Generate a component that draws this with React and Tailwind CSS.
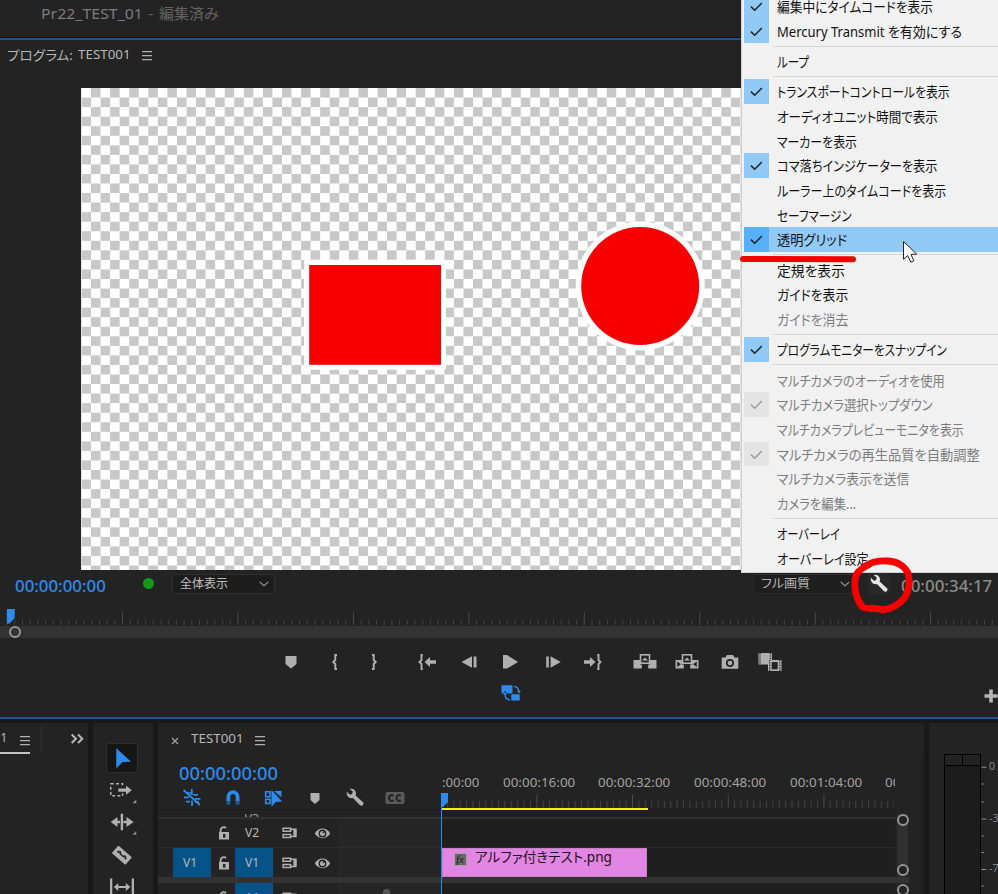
import React, { useLayoutEffect, useRef, useState } from "react";

const JP = "font-['Noto_Sans','Noto_Sans_CJK_JP',sans-serif]";

// Text squeezed or stretched horizontally to a set width.
function Fit({ w, className = "", children }) {
  const ref = useRef(null);
  const [scale, setScale] = useState(1);
  useLayoutEffect(() => {
    const n = ref.current.offsetWidth;
    if (n) setScale(w / n);
  }, [w, children]);
  return (
    <span className={`inline-block shrink-0 whitespace-nowrap ${className}`} style={{ width: w }}>
      <span ref={ref} className="inline-block origin-left [font-feature-settings:'palt']" style={{ transform: `scaleX(${scale})` }}>
        {children}
      </span>
    </span>
  );
}

function Icon({ className = "", w = 30, h = 24, children }) {
  return (
    <svg className={`shrink-0 ${className}`} width={w} height={h} viewBox={`${-w / 2} ${-h / 2} ${w} ${h}`} fill="#b0b0b0">
      {children}
    </svg>
  );
}

function Burger({ className = "" }) {
  return (
    <Icon w={12} h={12} className={className}>
      <path d="M-5-4.3H5M-5-.3H5M-5 3.7H5" stroke="#b0b0b0" strokeWidth="1.3" />
    </Icon>
  );
}

const MENU = [
  { t: "編集中にタイムコードを表示", w: 156, c: 1 },
  { t: "Mercury Transmit を有効にする", w: 185, c: 1 },
  null,
  { t: "ループ", w: 32 },
  null,
  { t: "トランスポートコントロールを表示", w: 173, c: 1 },
  { t: "オーディオユニット時間で表示", w: 161 },
  { t: "マーカーを表示", w: 80 },
  { t: "コマ落ちインジケーターを表示", w: 160, c: 1 },
  { t: "ルーラー上のタイムコードを表示", w: 169.5 },
  { t: "セーフマージン", w: 74.5 },
  { t: "透明グリッド", w: 70, c: 1, hot: true },
  null,
  { t: "定規を表示", w: 68 },
  { t: "ガイドを表示", w: 71.5 },
  { t: "ガイドを消去", w: 71.5, off: true },
  null,
  { t: "プログラムモニターをスナップイン", w: 170, c: 1 },
  null,
  { t: "マルチカメラのオーディオを使用", w: 168, off: true },
  { t: "マルチカメラ選択トップダウン", w: 155.5, c: 1, off: true },
  { t: "マルチカメラプレビューモニタを表示", w: 187, off: true },
  { t: "マルチカメラの再生品質を自動調整", w: 202.5, c: 1, off: true },
  { t: "マルチカメラ表示を送信", w: 132.5, off: true },
  { t: "カメラを編集...", w: 79.5, off: true },
  null,
  { t: "オーバーレイ", w: 62.5 },
  { t: "オーバーレイ設定", w: 91.5 },
];

function Menu() {
  return (
    <div className="absolute left-[741px] top-0 h-[573px] w-[257px] overflow-hidden border-b border-l border-[#cfcfcf] bg-[#f1f1f1]">
      <div className="-mt-[6px] flex flex-col pl-[2px]">
        {MENU.map((m, i) =>
          m === null ? (
            <div key={i} className="flex h-[5.67px] items-center pl-[29px]">
              <div className="h-px w-full bg-[#d6d6d6]" />
            </div>
          ) : (
            <div key={i} className={`flex h-[24.68px] items-center ${m.hot ? "bg-[#91c9f7]" : ""}`}>
              <div className={`flex h-full w-[24.5px] items-center justify-center ${!m.c ? "" : m.hot ? "bg-[#56b0fa]" : m.off ? "bg-[#e4e4e4]" : "bg-[#91c9f7]"}`}>
                {m.c && (
                  <svg width="14" height="12" viewBox="0 0 14 12" fill="none" className="mt-[1px]">
                    <path d="M1.9 5.6L5.7 9.3L12.9 2" stroke={m.off ? "#9c9c9c" : "#222"} strokeWidth="1.5" />
                  </svg>
                )}
              </div>
              <Fit w={m.w} className={`ml-[8px] mt-[1.4px] text-[14px] leading-[24px] ${JP} ${m.off ? "text-[#7d7d7d]" : "text-[#111]"}`}>
                {m.t}
              </Fit>
            </div>
          )
        )}
      </div>
    </div>
  );
}

function Viewer() {
  return (
    <svg className="ml-[81px] shrink-0" width="917" height="481.5" viewBox="81 88 917 481.5">
      <defs>
        <pattern id="grid" x="81.45" y="88" width="19.1" height="19.1" patternUnits="userSpaceOnUse">
          <rect width="19.1" height="19.1" fill="#fff" />
          <rect x="9.55" width="9.55" height="9.55" fill="#c8c8c8" />
          <rect y="9.55" width="9.55" height="9.55" fill="#c8c8c8" />
        </pattern>
      </defs>
      <rect x="81" y="88" width="917" height="482" fill="url(#grid)" />
      <rect x="304" y="259.7" width="142" height="110" rx="2" fill="#fff" />
      <rect x="309.2" y="265" width="131.8" height="99.8" fill="#f60000" />
      <circle cx="640.2" cy="286" r="64.5" fill="#fff" />
      <circle cx="640.2" cy="286" r="59" fill="#f60000" />
    </svg>
  );
}

function Ticks({ x0, step, count, width, h, tall, short }) {
  return (
    <svg className="block shrink-0" width={width} height={h}>
      {Array.from({ length: count }, (_, i) => (
        <rect key={i} x={x0 + i * step} y={i % 15 === 0 ? h - tall : h - short} width="1" height={i % 15 === 0 ? tall : short} fill={i % 15 === 0 ? "#4b4b4b" : "#444"} />
      ))}
    </svg>
  );
}

const WRENCH = "M-8.3-6.2L-5-3.2L-2.8-3.9L-2.3-6.4L-5.3-9C-2.8-9.8.6-8.3 1-5C1.1-4 .9-3.2.6-2.5L8 4.3C9.6 6.2 7 8.9 5.1 7.3L-2.1-.1C-5.2.9-8.6-1.4-8.3-6.2Z";

function Chevron() {
  return (
    <svg width="10" height="6" viewBox="0 0 10 6" fill="none">
      <path d="M.7.8L5 4.8L9.3.8" stroke="#a5a5a5" strokeWidth="1.1" />
    </svg>
  );
}

function Transport() {
  return (
    <div className="mt-[11.5px] flex h-6 shrink-0 items-center">
      <Icon className="ml-[276px]">
        <path d="M-5.5-6H5.5V2L0 6.5L-5.5 2Z" />
      </Icon>
      <Icon className="ml-[14px]">
        <path d="M2-7H.3V-2L-1.7 0L.3 2V7H2" fill="none" stroke="#b0b0b0" strokeWidth="1.9" />
      </Icon>
      <Icon className="ml-[8.5px]">
        <path d="M-2-7H-.3V-2L1.7 0L-.3 2V7H-2" fill="none" stroke="#b0b0b0" strokeWidth="1.9" />
      </Icon>
      <Icon className="ml-[23.5px]">
        <path d="M-4.2-7H-5.5V-2L-7.5 0L-5.5 2V7H-4.2" fill="none" stroke="#b0b0b0" strokeWidth="1.9" />
        <path d="M-2.5 0L3-5V-1.7H9V1.7H3V5Z" />
      </Icon>
      <Icon className="ml-[11.5px]">
        <path d="M-7.5 0L3-5.7V5.7ZM4.6-5.5H7.5V5.5H4.6Z" />
      </Icon>
      <Icon className="ml-[11.5px]">
        <path d="M-7-7H-3L8 0L-3 6.5H-7Z" />
      </Icon>
      <Icon className="ml-[13px]">
        <path d="M7.7 0L-2.4-5.7V5.7ZM-4.2-5.5H-6.8V5.5H-4.2Z" />
      </Icon>
      <Icon className="ml-[10px]">
        <path d="M4.2-7H5.5V-2L7.5 0L5.5 2V7H4.2" fill="none" stroke="#b0b0b0" strokeWidth="1.9" />
        <path d="M2.5 0L-3-5V-1.7H-9V1.7H-3V5Z" />
      </Icon>
      <Icon className="ml-[22px]">
        <path d="M-11.5-2H-5V2.5H5V-2H11.5V6.5H3.2V2.5H-3.2V6.5H-11.5Z" />
        <rect x="-4.5" y="-7.2" width="9" height="8.4" fill="#232323" stroke="#b0b0b0" strokeWidth="1.6" />
        <path d="M-3-1.5L0-4.5L3-1.5Z" />
      </Icon>
      <Icon className="ml-[11.5px]">
        <path d="M-11.5-2H-5V2.5H5V-2H11.5V6.5H3.2V2.5H-3.2V6.5H-11.5Z" />
        <path d="M-9.8-.5L-6 2.3L-9.8 5ZM9.8-.5L6 2.3L9.8 5Z" fill="#232323" />
        <rect x="-4.5" y="-7.2" width="9" height="8.4" fill="#232323" stroke="#b0b0b0" strokeWidth="1.6" />
        <path d="M-3-1.5L0-4.5L3-1.5Z" />
      </Icon>
      <Icon className="ml-[13px]">
        <path d="M-8.3-4.5H-4.5L-3-7H3L4.5-4.5H8.3V6.7H-8.3Z" />
        <circle cy="1" r="3.2" fill="none" stroke="#232323" strokeWidth="1.7" />
      </Icon>
      <Icon className="ml-[10.5px]">
        <rect x="-11.5" y="-9" width="13.5" height="11.5" />
        <path d="M-10-9V2.5M.5-9V2.5" stroke="#232323" strokeWidth="1.3" strokeDasharray="1.2 1.2" />
        <rect x="-2" y="-2" width="13.5" height="11" />
        <rect x="1.7" y="0" width="6" height="7.3" fill="#232323" />
        <path d="M-.3-2V9M9.8-2V9" stroke="#232323" strokeWidth="1.3" strokeDasharray="1.2 1.2" />
      </Icon>
    </div>
  );
}

function Program() {
  return (
    <div className="flex h-[677px] shrink-0 flex-col bg-[#232323]">
      <div className="flex h-[48px] shrink-0 items-start pl-[6.5px] pt-[4.5px]">
        <Fit w={66} className={`text-[13px] leading-5 text-[#b8b8b8] ${JP}`}>プログラム:</Fit>
        <Fit w={52.5} className={`ml-[5px] text-[12.5px] leading-5 text-[#b8b8b8] ${JP}`}>TEST001</Fit>
        <Burger className="ml-[10.5px] mt-[5.5px]" />
      </div>
      <Viewer />
      <div className="mt-[4.5px] flex h-[20px] shrink-0 items-center">
        <Fit w={90.5} className="ml-[15px] mt-[3px] font-['Noto_Sans',sans-serif] text-[16px] font-medium leading-5 text-[#2d8ceb]">00:00:00:00</Fit>
        <div className="-mt-[1px] ml-[37px] size-[11px] rounded-full bg-[#149b14]" />
        <div className="ml-[18px] flex h-[20px] w-[103px] items-center justify-between rounded-[3px] border border-[#303030] bg-[#1d1d1d] pl-[7px] pr-[5px]">
          <Fit w={48} className={`text-[12.5px] leading-[18px] text-[#bdbdbd] ${JP}`}>全体表示</Fit>
          <Chevron />
        </div>
        <div className="ml-[478px] flex h-[20px] w-[103px] items-center justify-between rounded-[3px] border border-[#2c2c2c] bg-[#1f1f1f] pl-[7.5px] pr-[5px]">
          <Fit w={49} className={`text-[12.5px] leading-[18px] text-[#b5b5b5] ${JP}`}>フル画質</Fit>
          <Chevron />
        </div>
        <div className="ml-[12px] flex size-[22px] items-center justify-center rounded-[3px] bg-[#292929]">
          <Icon w={20} h={20}>
            <path d={WRENCH} fill="#e6e6e6" />
          </Icon>
        </div>
        <Fit w={91} className="ml-[11.5px] mt-[3px] font-['Noto_Sans',sans-serif] text-[16px] font-medium leading-5 text-[#8b8b8b]">00:00:34:17</Fit>
      </div>
      <div className="mt-[17.5px] shrink-0">
        <Ticks x0={6.6} step={7.696} count={129} width={998} h={13} tall={13} short={5} />
      </div>
      <div className="mt-[1.5px] flex h-[12px] shrink-0 items-center bg-[#333]">
        <div className="ml-[9px] size-[12px] rounded-full border-[2.3px] border-[#959595] bg-[#333]" />
      </div>
      <Transport />
      <div className="mt-[7px] flex h-6 shrink-0 items-center">
        <Icon className="ml-[495.5px]">
          <g fill="#2d8ceb">
            <path d="M-9.5-7.7H1.5V.6H-4L-6-2.2L-7.5.6H-9.5Z" />
            <rect x=".3" y="1.3" width="8.4" height="6.2" />
            <path d="M3-6.6C6-6.3 7.7-4.5 7.9-1" fill="none" stroke="#2d8ceb" strokeWidth="1.4" />
            <path d="M5.7-2.2H10L8 .6Z" />
            <path d="M-1 7C-4.2 6.7-5.9 4.6-6 1" fill="none" stroke="#2d8ceb" strokeWidth="1.4" />
            <path d="M-8 1.6H-4L-6-1.1Z" />
          </g>
        </Icon>
        <Icon w={14} h={14} className="ml-[458.5px] mt-[6px]">
          <path d="M-1.8-6.5H1.8V-1.8H6.5V1.8H1.8V6.5H-1.8V1.8H-6.5V-1.8H-1.8Z" fill="#b5b5b5" />
        </Icon>
      </div>
    </div>
  );
}

function Tools() {
  return (
    <div className="flex w-[60px] shrink-0 flex-col items-center overflow-hidden bg-[#232323] pr-[3px] pt-[19.5px]">
      <div className="flex h-[30px] w-[32px] shrink-0 items-center justify-center rounded-[3px] border border-[#2f2f2f] bg-[#161616]">
        <Icon>
          <path d="M-5.7-9.8V10.4L.4 4L9.1 3.7Z" fill="#2d8ceb" />
        </Icon>
      </div>
      <Icon w={36} h={28} className="mt-[3px]">
        <path d="M-11.2-6.3H.6V5.7H-11.2Z" fill="none" stroke="#b0b0b0" strokeWidth="1.5" strokeDasharray="3 2.2" />
        <rect x="-4" y="-3" width="8" height="6.5" fill="#232323" />
        <path d="M-3.7-1.5H4V-4.5L9.8 .3L4 4.8V1.8H-3.7Z" />
        <path d="M14.3 9.5V13.3H10.5Z" fill="#8e8e8e" />
      </Icon>
      <Icon w={36} h={32} className="mt-[2px]">
        <path d="M-11.3 0L-4.5-5V-1.2H-2V1.2H-4.5V5ZM11.5 0L4.5-5V-1.2H1.5V1.2H4.5V5ZM-1.3-8.3H1.1V8.3H-1.3Z" />
        <path d="M14.3 9V12.8H10.5Z" fill="#8e8e8e" />
      </Icon>
      <Icon w={36} h={32} className="mt-[2px]">
        <g transform="translate(-.2 -.8) rotate(41)">
          <rect x="-9" y="-5" width="18" height="10" rx=".8" />
          <path d="M-6 0H-4.5C-4.5-2-2.2-2-2.2 0H2.2C2.2-2 4.5-2 4.5 0H6" fill="none" stroke="#232323" strokeWidth="1.5" />
        </g>
      </Icon>
      <Icon w={36} h={32} className="mt-[-1px]">
        <path d="M-12-8.5H-9.7V9H-12ZM9.7-8.5H12V9H9.7ZM-8.2 0L-3.7-4V-1H3.8V-4L8.3 0L3.8 4V1H-3.7V4Z" />
      </Icon>
    </div>
  );
}

function Lock({ className = "" }) {
  return (
    <Icon w={14} h={16} className={className}>
      <path d="M-3.4-1V-2.8A3.2 3.2 0 0 1 2-5" fill="none" stroke="#b0b0b0" strokeWidth="1.8" />
      <path d="M-5-1H5V6.5H-5Z" />
      <path d="M-1 1H1.4V4.6H-1Z" fill="#232323" />
    </Icon>
  );
}

function SyncIcon() {
  return (
    <Icon w={16} h={14}>
      <path d="M-6.9-4.8H.6V-1.8H-6.9ZM-6.9 1.5H.6V4.5H-6.9ZM.6-3.8H5.8V3.4H.6" fill="none" stroke="#b0b0b0" strokeWidth="1.5" />
      <path d="M3.4-3.8H6.5V3.4H3.4Z" />
    </Icon>
  );
}

function TrackHeader({ label, source, blue, h, eye = true }) {
  return (
    <div className={`flex w-[283px] shrink-0 items-center overflow-hidden bg-[#232323] ${h}`}>
      <div className={`ml-[15px] flex h-full w-[38px] shrink-0 items-center justify-center pr-[3px] pt-[1px] text-[12.5px] text-[#b8b8b8] ${source ? "bg-[#055388]" : ""} ${JP}`}>
        {source && <Fit w={14.5}>{source}</Fit>}
      </div>
      <Lock className="ml-[6px]" />
      <div className={`ml-[4px] flex h-full w-[38px] shrink-0 items-center justify-center pr-[3px] pt-[1px] text-[12.5px] text-[#b8b8b8] ${blue ? "bg-[#055388]" : ""} ${JP}`}>
        <Fit w={14.5}>{label}</Fit>
      </div>
      <div className="ml-[9px] flex">
        <SyncIcon />
      </div>
      <div className="ml-[15.5px] flex">
        {eye && (
          <Icon w={17} h={14}>
            <path d="M-7.7.6C-4-6.2 4-6.2 7.7.6C4 6.8-4 6.8-7.7.6Z" />
            <circle cy=".5" r="3.9" fill="#232323" />
            <circle cy=".5" r="2.5" />
            <circle cx="1" cy="-.8" r="1" fill="#232323" />
          </Icon>
        )}
      </div>
      <div className="ml-auto h-full w-[103px] bg-[#262626]" />
    </div>
  );
}

const LABELS = [
  { t: ":00:00", w: 37, m: "ml-[.5px]" },
  { t: "00:00:16:00", w: 72, m: "ml-[24.3px]" },
  { t: "00:00:32:00", w: 72, m: "ml-[23.5px]" },
  { t: "00:00:48:00", w: 72, m: "ml-[23.7px]" },
  { t: "00:01:04:00", w: 72, m: "ml-[23.7px]" },
  { t: "00:01:20:00", w: 72, m: "ml-[23.7px]" },
];

function Ring({ className = "" }) {
  return <div className={`size-[12px] shrink-0 rounded-full border-[2.5px] border-[#959595] bg-[#232323] ${className}`} />;
}

function Timeline() {
  return (
    <div className="relative flex w-[766px] shrink-0 flex-col overflow-hidden bg-[#232323]">
      <div className="flex h-[32px] shrink-0 items-center">
        <Icon w={10} h={10} className="ml-[11.5px] mt-[4px]">
          <path d="M-3-3L3 3M3-3L-3 3" stroke="#a5a5a5" strokeWidth="1.2" />
        </Icon>
        <Fit w={52.5} className={`-mt-[1px] ml-[11px] text-[12.5px] leading-5 text-[#b8b8b8] ${JP}`}>TEST001</Fit>
        <Burger className="ml-[10.5px] mt-[3px]" />
      </div>
      <div className="flex h-[54px] shrink-0">
        <div className="flex w-[283px] shrink-0 flex-col">
          <Fit w={99} className="ml-[20.7px] mt-[5px] font-['Noto_Sans',sans-serif] text-[18px] font-medium leading-[26px] text-[#2d8ceb]">00:00:00:00</Fit>
          <div className="flex h-[24px] items-center">
            <Icon w={24} className="ml-[22px]">
              <path d="M-8-.7H-3M-6 3.7H-2M1.5-3.2H6M3 .8H8.5M-.2-9V-3M0 2.5V8M-8.5-8L8 7" fill="none" stroke="#2d8ceb" strokeWidth="1.8" />
              <path d="M-6-5H-1M3 4H7" stroke="#2d8ceb" strokeWidth="1.6" />
            </Icon>
            <Icon w={24} className="ml-[16.5px]">
              <path d="M-4.6 3V-1.2A4.6 4.6 0 0 1 4.6-1.2V3" fill="none" stroke="#2d8ceb" strokeWidth="3.8" />
              <path d="M-6.5 3H-2.7V6.8H-6.5ZM2.7 3H6.5V6.8H2.7Z" fill="#1d5a94" />
            </Icon>
            <Icon w={24} className="ml-[16.5px]">
              <path d="M-7.3-6.3H-3V-1.3H-7.3ZM-7.3 1.2H-3V5.5H-7.3Z" fill="none" stroke="#2d8ceb" strokeWidth="1.6" />
              <path d="M-1.5-8V8.7L2.7 4L9 3.5Z" fill="#2d8ceb" />
              <path d="M1-7H8.5V-.8Z" fill="#2d8ceb" />
            </Icon>
            <Icon w={24} className="ml-[18px]">
              <path d="M-4.5-5H4.5V2L0 6L-4.5 2Z" />
            </Icon>
            <Icon w={24} className="ml-[16px]">
              <path d={WRENCH} />
            </Icon>
            <Icon w={24} className="ml-[16px]">
              <rect x="-9.5" y="-6" width="19" height="12" rx="2" fill="#5a5a5a" />
              <path d="M-1.5-2.2C-3-3.5-6-3-6 0S-3 3.5-1.5 2.2M6-2.2C4.5-3.5 1.5-3 1.5 0S4.5 3.5 6 2.2" fill="none" stroke="#232323" strokeWidth="2" />
            </Icon>
          </div>
        </div>
        <div className="flex w-[454px] shrink-0 flex-col overflow-hidden">
          <div className="mt-[18px] flex h-[20px] items-center">
            {LABELS.map((l) => (
              <Fit key={l.t} w={l.w} className={`text-[12.5px] leading-5 text-[#a2a2a2] ${l.m} font-['Noto_Sans',sans-serif]`}>
                {l.t}
              </Fit>
            ))}
          </div>
          <div className="pt-[1px]">
            <Ticks x0={-0.4} step={6.38} count={72} width={453} h={14} tall={13.5} short={7} />
          </div>
        </div>
      </div>
      <div className="flex min-h-0 flex-1">
        <div className="flex w-[737px] shrink-0 flex-col">
          <div className="flex h-[8px] shrink-0">
            <div className="flex w-[283px] shrink-0 items-end overflow-hidden border-t border-[#1d1d1d]">
              <div className={`ml-[86.5px] h-[4px] overflow-hidden text-[12.5px] leading-[11px] text-[#a0a0a0] ${JP}`}>
                <Fit w={15}>V3</Fit>
              </div>
            </div>
            <div className="w-[454px] bg-[#1f1f1f]" />
          </div>
          <div className="h-[2px] shrink-0 bg-[#303030]" />
          <div className="flex h-[28px] shrink-0">
            <TrackHeader label="V2" h="h-[28px]" />
            <div className="flex-1 bg-[#1f1f1f]" />
          </div>
          <div className="h-[1px] shrink-0 bg-[#2c2c2c]" />
          <div className="flex h-[29px] shrink-0">
            <TrackHeader label="V1" source="V1" blue h="h-[29px]" />
            <div className="flex flex-1 bg-[#1f1f1f]">
              <div className="ml-[1px] flex h-[29px] w-[205px] items-start border border-[#c77fc7] bg-[#e386e3] pl-[10.5px] pt-[4px]">
                <div className="flex h-[13px] w-[13px] items-center justify-center border border-[#a3a3a3] bg-[#686868] font-['Liberation_Serif',serif] text-[11px] italic leading-none text-[#1a1a1a]">fx</div>
                <Fit w={137} className={`-mt-[6px] ml-[8.5px] text-[13.5px] leading-5 text-[#1c1020] ${JP}`}>アルファ付きテスト.png</Fit>
              </div>
            </div>
          </div>
          <div className="h-[6px] w-[751px] shrink-0 bg-[#333]" />
          <div className="flex h-[11px] shrink-0 overflow-hidden">
            <div className="h-[29px]">
              <TrackHeader label="A1" blue h="h-[29px]" eye={false} />
            </div>
            <div className="flex-1 bg-[#1f1f1f]" />
          </div>
        </div>
        <div className="flex w-[15px] shrink-0 flex-col items-center">
          <div className="mt-[5px] flex h-[62px] w-[11px] shrink-0 flex-col items-center justify-between bg-[#303030]">
            <Ring />
            <Ring />
          </div>
          <Ring className="mt-[8px]" />
        </div>
      </div>
      {/* work area bar, playhead and track knob */}
      <div className="absolute left-[284px] top-[84.5px] h-[2.5px] w-[206px] bg-[#f7f300]" />
      <div className="absolute left-[282.7px] top-[84px] h-[87px] w-[1.5px] bg-[#2d8ceb]" />
      <svg className="absolute left-[283px] top-[70px]" width="7" height="14">
        <path d="M0 0H7V9L2 14H0Z" fill="#2d8ceb" />
      </svg>
      <div className="absolute left-[225px] top-[166px] h-[8px] w-[7px] rounded-full bg-[#555]" />
      <div className="absolute left-[764px] top-[33px] h-[138px] w-px bg-[#191919]" />
    </div>
  );
}

function Meter() {
  const marks = [["0", 767.3], ["", 784], ["", 802], ["-3", 819], ["", 836], ["", 852.5], ["-7", 869.5], ["", 886]];
  return (
    <div className="flex flex-1 overflow-hidden bg-[#232323] pl-[15px] pt-[31px]">
      <div className="flex w-[37px] shrink-0 flex-col border border-b-0 border-black bg-[#1c1c1c]">
        <div className="flex h-[11px] border-b border-black bg-[#232323]">
          <div className="w-[18px] border-r border-black" />
        </div>
      </div>
      <svg width="17" height="140" viewBox="981 754 17 140">
        {marks.map(([t, y]) => (
          <g key={y}>
            <rect x="981.5" y={y - 0.5} width={t ? 4.8 : 2.3} height="1" fill="#909090" />
            {t && (
              <text x="989" y={y + 2.8} fontSize="10.5" fill="#858585" fontFamily="Noto Sans">
                {t}
              </text>
            )}
          </g>
        ))}
      </svg>
    </div>
  );
}

export default function App() {
  return (
    <div className="relative flex h-[894px] w-[998px] flex-col overflow-hidden bg-[#181818]">
      <div className={`flex h-[37px] shrink-0 items-start bg-[#232323] pl-[41px] pt-[2px] text-[14.5px] leading-[22px] ${JP}`}>
        <Fit w={102} className="text-[#7c7c80]">Pr22_TEST_01</Fit>
        <Fit w={6} className="ml-[5px] text-[#66625f]">-</Fit>
        <Fit w={60} className="ml-[4.5px] text-[#66625f]">編集済み</Fit>
      </div>
      <div className="h-[3px] shrink-0 border-b-2 border-t border-b-[#1c5596] border-t-[#111]" />
      <Program />
      <div className="h-[2px] shrink-0 bg-[#1c5596]" />
      <div className="h-[4px] shrink-0 bg-[#181818]" />
      <div className="flex min-h-0 flex-1 gap-[5px]">
        <div className="flex w-[88px] shrink-0 items-start overflow-hidden bg-[#232323]">
          <div className="h-[30.5px] w-[30px] shrink-0 border-b-2 border-[#c4c4c4] pt-[5px]">
            <div className="flex items-start">
              <span className={`-ml-[7px] text-[12.5px] leading-5 text-[#b8b8b8] ${JP}`}>01</span>
              <Burger className="ml-[12px] mt-[6.5px]" />
            </div>
          </div>
          <div className="ml-[10.5px] mt-[2px] h-[28px] w-px bg-[#303030]" />
          <Icon w={14} h={12} className="ml-[28.5px] mt-[9.5px]">
            <path d="M-5.3-4.5L-1-.2L-5.3 4M1-4.5L5.3-.2L1 4" fill="none" stroke="#b8b8b8" strokeWidth="2" />
          </Icon>
        </div>
        <Tools />
        <Timeline />
        <Meter />
      </div>
      <svg className="absolute left-[7px] top-[609px]" width="8" height="16">
        <path d="M0 0H7.7V9L2.5 14.5H0Z" fill="#2d8ceb" />
      </svg>
      <Menu />
      {/* hand-drawn annotations and mouse pointer */}
      <svg className="pointer-events-none absolute left-[735px] top-[230px]" width="263" height="390" viewBox="735 230 263 390" fill="none">
        <path d="M743 259L853 259.2" stroke="#f60000" strokeWidth="6" strokeLinecap="round" />
        <path d="M866 565.5C872 561.5 880 560.7 888 561C897 561.5 906 566 908.5 575C910 584 908.5 592 904.5 598C899 604.5 893 608.5 883 610C876 607 869 610 862.5 607C857.5 601 854.5 592 854.7 582C855 573 860 569 869 564.5" stroke="#f60000" strokeWidth="6.8" strokeLinecap="round" strokeLinejoin="round" />
        <path d="M903.5 241.5V259.3L907.7 255.6L910.8 262.2L913.8 260.8L911 254.5L916.7 254Z" fill="#fff" stroke="#222" strokeWidth="1" />
      </svg>
    </div>
  );
}
